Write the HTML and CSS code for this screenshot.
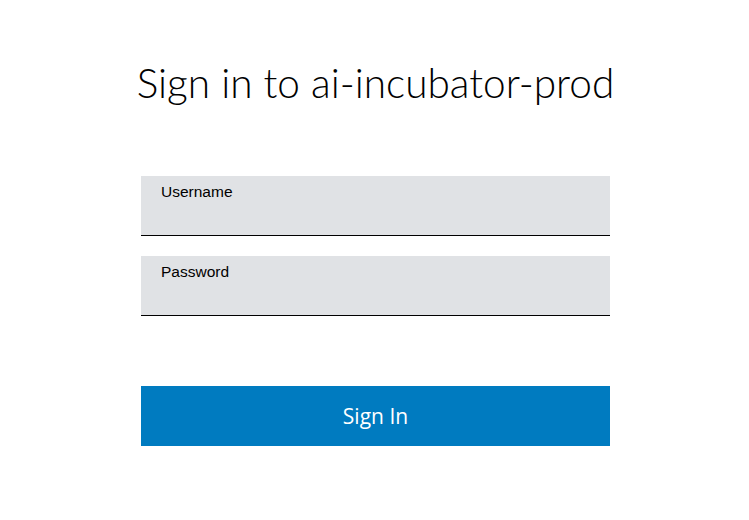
FILE: index.html
```html
<!DOCTYPE html>
<html>
<head>
<meta charset="utf-8">
<link rel="stylesheet" href="styles.css">
</head>
<body>
<main class="login">
  <h1 class="title">Sign in to ai-incubator-prod</h1>
  <form class="form">
    <label class="field">
      <span class="field-label">Username</span>
      <input class="field-input" type="text">
    </label>
    <label class="field">
      <span class="field-label">Password</span>
      <input class="field-input" type="password">
    </label>
    <button class="submit" type="button">Sign In</button>
  </form>
</main>
</body>
</html>
```
FILE: styles.css
```css
* { box-sizing: border-box; }
html, body { margin: 0; padding: 0; background: #fff; }
body { font-family: "Liberation Sans", Arial, sans-serif; color: #000; }
.login {
  width: 469px;
  margin-left: calc(50% - 233.5px);
  padding-top: 56px;
  display: flex;
  flex-direction: column;
  align-items: center;
}
.title {
  margin: 0;
  font-family: Lato, sans-serif;
  font-weight: 300;
  font-size: 40.6px;
  line-height: 54px;
  white-space: nowrap;
  color: #000;
}
.form {
  width: 469px;
  margin-top: 66px;
  display: flex;
  flex-direction: column;
  gap: 20px;
}
.field {
  display: flex;
  flex-direction: column;
  height: 60px;
  background: #e0e2e5;
  border-bottom: 1px solid #000;
  padding: 7px 20px 0;
}
.field-label {
  font-size: 15.5px;
  line-height: 18px;
}
.field-input {
  border: 0;
  background: transparent;
  outline: none;
  font: inherit;
  padding: 0;
}
.submit {
  margin-top: 50px;
  height: 60px;
  border: 0;
  background: #007bc0;
  color: #fff;
  font-family: "Open Sans", sans-serif;
  font-size: 21px;
  cursor: pointer;
}
```
